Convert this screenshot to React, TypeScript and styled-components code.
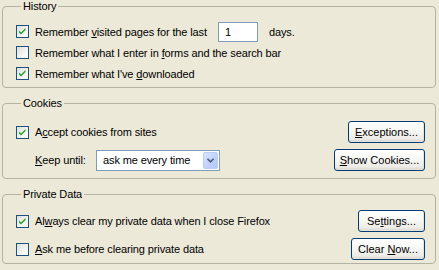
import React from 'react';
import styled, { createGlobalStyle } from 'styled-components';

const GlobalStyle = createGlobalStyle`
  html, body {
    margin: 0;
    padding: 0;
    background: #ece9d8;
  }
  body {
    font-family: "Liberation Sans", Arial, sans-serif;
    font-size: 11px;
    letter-spacing: -0.12px;
    color: #000;
  }
`;

const Page = styled.div`
  width: 439px;
  height: 270px;
  padding: 0 3px 0 2px;
  box-sizing: border-box;
  display: flex;
  flex-direction: column;
  gap: 9px;
`;

const Group = styled.fieldset<{ $top: number; $bottom: number }>`
  margin: 0;
  padding: ${p => p.$top}px 10px ${p => p.$bottom}px 13px;
  border: 1px solid #b4b2a2;
  border-radius: 4px;
  display: flex;
  flex-direction: column;
  gap: 6px;
  min-width: 0;
`;

const Legend = styled.legend`
  padding: 0 2px;
  margin-left: 5px;
  line-height: 13px;
`;

const Row = styled.div<{ $h?: number }>`
  display: flex;
  align-items: center;
  justify-content: space-between;
  height: ${p => p.$h ?? 22}px;
`;

const Left = styled.div<{ $indent?: number }>`
  display: flex;
  align-items: center;
  padding-left: ${p => p.$indent ?? 0}px;
`;

const CheckLabel = styled.label`
  display: flex;
  align-items: center;
  gap: 6px;
  white-space: nowrap;
`;

const Key = styled.span`
  text-decoration: underline;
`;

const TextBox = styled.div`
  width: 32px;
  height: 18px;
  margin-left: 11px;
  border: 1px solid #7f9db9;
  background: #fff;
  line-height: 18px;
  padding-left: 6px;
`;

const Days = styled.span`
  margin-left: 11px;
`;

const Plain = styled.span`
  white-space: nowrap;
  width: 61px;
`;

const Select = styled.div`
  width: 115px;
  height: 19px;
  border: 1px solid #7f9db9;
  background: #fff;
  display: flex;
  align-items: center;
  justify-content: space-between;
  padding: 0 1px 0 6px;
`;

const DropButton = styled.div`
  width: 15px;
  height: 17px;
  border: 1px solid #b9cdf6;
  border-radius: 2px;
  background: linear-gradient(135deg, #dbe6fd 0%, #c1d3fb 55%, #b2c7f7 100%);
  display: flex;
  align-items: center;
  justify-content: center;
  box-sizing: border-box;
`;

const Button = styled.button<{ $w: number }>`
  width: ${p => p.$w}px;
  height: 22px;
  padding: 0;
  font: inherit;
  color: #000;
  border: 1px solid #003c74;
  border-radius: 3px;
  background: linear-gradient(180deg, #ffffff 0%, #f7f7f4 45%, #ecebe6 85%, #d6d0c5 100%);
  box-shadow: inset -1px -1px 0 #e3e2dc;
`;

const Box = ({ checked }: { checked: boolean }) => (
  <svg width="13" height="13" viewBox="0 0 13 13">
    <defs>
      <linearGradient id="cbg" x1="0" y1="0" x2="1" y2="1">
        <stop offset="0" stopColor="#dcdcd7" />
        <stop offset="0.6" stopColor="#f5f5f3" />
        <stop offset="1" stopColor="#ffffff" />
      </linearGradient>
    </defs>
    <rect x="0.5" y="0.5" width="12" height="12" fill="url(#cbg)" stroke="#1c5180" />
    {checked && (
      <path d="M3 5.5 L5 7.5 L9.5 3 L9.5 5 L5 9.5 L3 7.5 Z" fill="#21a121" />
    )}
  </svg>
);

const Check = ({ checked, children }: { checked: boolean; children: React.ReactNode }) => (
  <CheckLabel>
    <Box checked={checked} />
    <span>{children}</span>
  </CheckLabel>
);

const Chevron = () => (
  <svg width="7" height="5" viewBox="0 0 7 5">
    <path d="M0.5 0.8 L3.5 3.8 L6.5 0.8" fill="none" stroke="#4d6185" strokeWidth="1.6" />
  </svg>
);

export default function App() {
  return (
    <>
      <GlobalStyle />
      <Page>
        <Group $top={8} $bottom={3}>
          <Legend>History</Legend>
          <div>
            <Row $h={21}>
              <Left>
                <Check checked>
                  Remember <Key>v</Key>isited pages for the last
                </Check>
                <TextBox>1</TextBox>
                <Days>days.</Days>
              </Left>
            </Row>
            <Row $h={21}>
              <Check checked={false}>
                Remember what I enter in <Key>f</Key>orms and the search bar
              </Check>
            </Row>
            <Row $h={21}>
              <Check checked>
                Remember what I've <Key>d</Key>ownloaded
              </Check>
            </Row>
          </div>
        </Group>

        <Group $top={11} $bottom={7}>
          <Legend>Cookies</Legend>
          <Row>
            <Check checked>
              A<Key>c</Key>cept cookies from sites
            </Check>
            <Button $w={77}>
              <Key>E</Key>xceptions...
            </Button>
          </Row>
          <Row>
            <Left $indent={19}>
              <Plain>
                <Key>K</Key>eep until:
              </Plain>
              <Select>
                <span>ask me every time</span>
                <DropButton>
                  <Chevron />
                </DropButton>
              </Select>
            </Left>
            <Button $w={91}>
              <Key>S</Key>how Cookies...
            </Button>
          </Row>
        </Group>

        <Group $top={9} $bottom={3}>
          <Legend>Private Data</Legend>
          <Row>
            <Check checked>
              Al<Key>w</Key>ays clear my private data when I close Firefox
            </Check>
            <Button $w={67}>
              Se<Key>t</Key>tings...
            </Button>
          </Row>
          <Row>
            <Check checked={false}>
              <Key>A</Key>sk me before clearing private data
            </Check>
            <Button $w={74}>
              Clear <Key>N</Key>ow...
            </Button>
          </Row>
        </Group>
      </Page>
    </>
  );
}
